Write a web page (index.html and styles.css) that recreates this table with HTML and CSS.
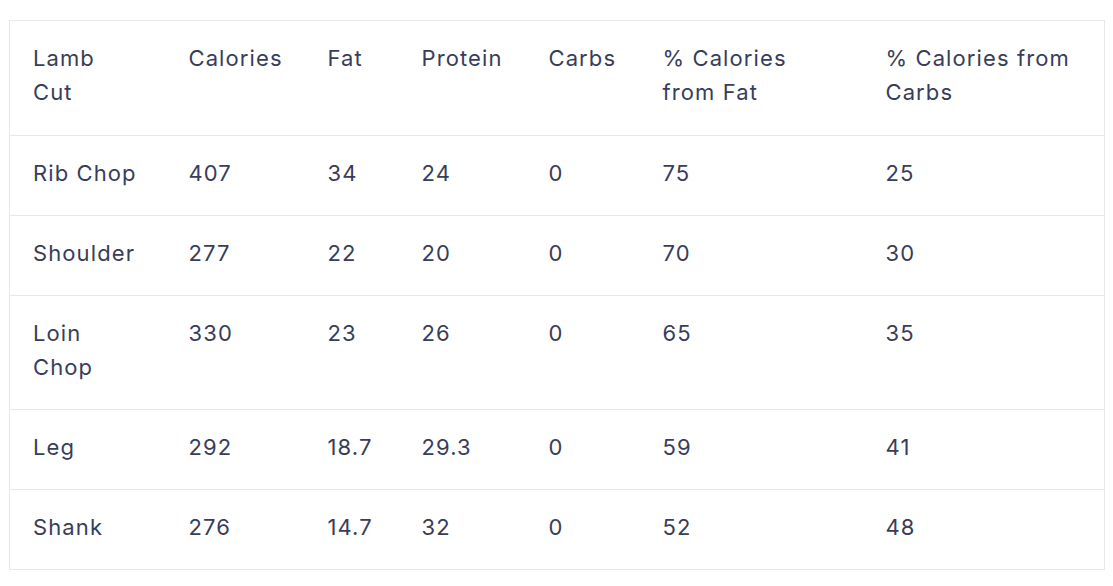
FILE: index.html
```html
<!DOCTYPE html>
<html lang="en">
<head>
<meta charset="utf-8">
<title>Lamb Cuts</title>
<link rel="stylesheet" href="styles.css">
</head>
<body>
<div class="wrap">
<table class="nutrition">
<colgroup>
<col class="c1"><col class="c2"><col class="c3"><col class="c4"><col class="c5"><col class="c6"><col class="c7">
</colgroup>
<thead>
<tr><th>Lamb<br>Cut</th><th>Calories</th><th>Fat</th><th>Protein</th><th>Carbs</th><th>% Calories from Fat</th><th>% Calories from Carbs</th></tr>
</thead>
<tbody>
<tr><td class="nowrap">Rib Chop</td><td>407</td><td>34</td><td>24</td><td>0</td><td>75</td><td>25</td></tr>
<tr><td>Shoulder</td><td>277</td><td>22</td><td>20</td><td>0</td><td>70</td><td>30</td></tr>
<tr><td>Loin<br>Chop</td><td>330</td><td>23</td><td>26</td><td>0</td><td>65</td><td>35</td></tr>
<tr><td>Leg</td><td>292</td><td>18.7</td><td>29.3</td><td>0</td><td>59</td><td>41</td></tr>
<tr><td>Shank</td><td>276</td><td>14.7</td><td>32</td><td>0</td><td>52</td><td>48</td></tr>
</tbody>
</table>
</div>
</body>
</html>
```
FILE: styles.css
```css
html, body {
  margin: 0;
  background: #ffffff;
}
.wrap {
  padding: 20px 9px 0 9px;
}
.nutrition {
  width: 1095px;
  border-collapse: collapse;
  table-layout: fixed;
  border: 1px solid #e8e8ea;
  font-family: Inter, "Noto Sans", sans-serif;
  font-size: 22px;
  letter-spacing: 0.05em;
  line-height: 34px;
  color: #383d5a;
}
.c1 { width: 156px; }
.c2 { width: 139px; }
.c3 { width: 94px; }
.c4 { width: 127px; }
.c5 { width: 114px; }
.c6 { width: 223px; }
.c7 { width: 242px; }
.nutrition th,
.nutrition td {
  padding: 20px 23px 25px 23px;
  text-align: left;
  vertical-align: top;
  font-weight: 400;
  border-bottom: 1px solid #e8e8ea;
}
.nutrition th {
  padding-bottom: 26px;
}
.nutrition .nowrap {
  white-space: nowrap;
}
```
